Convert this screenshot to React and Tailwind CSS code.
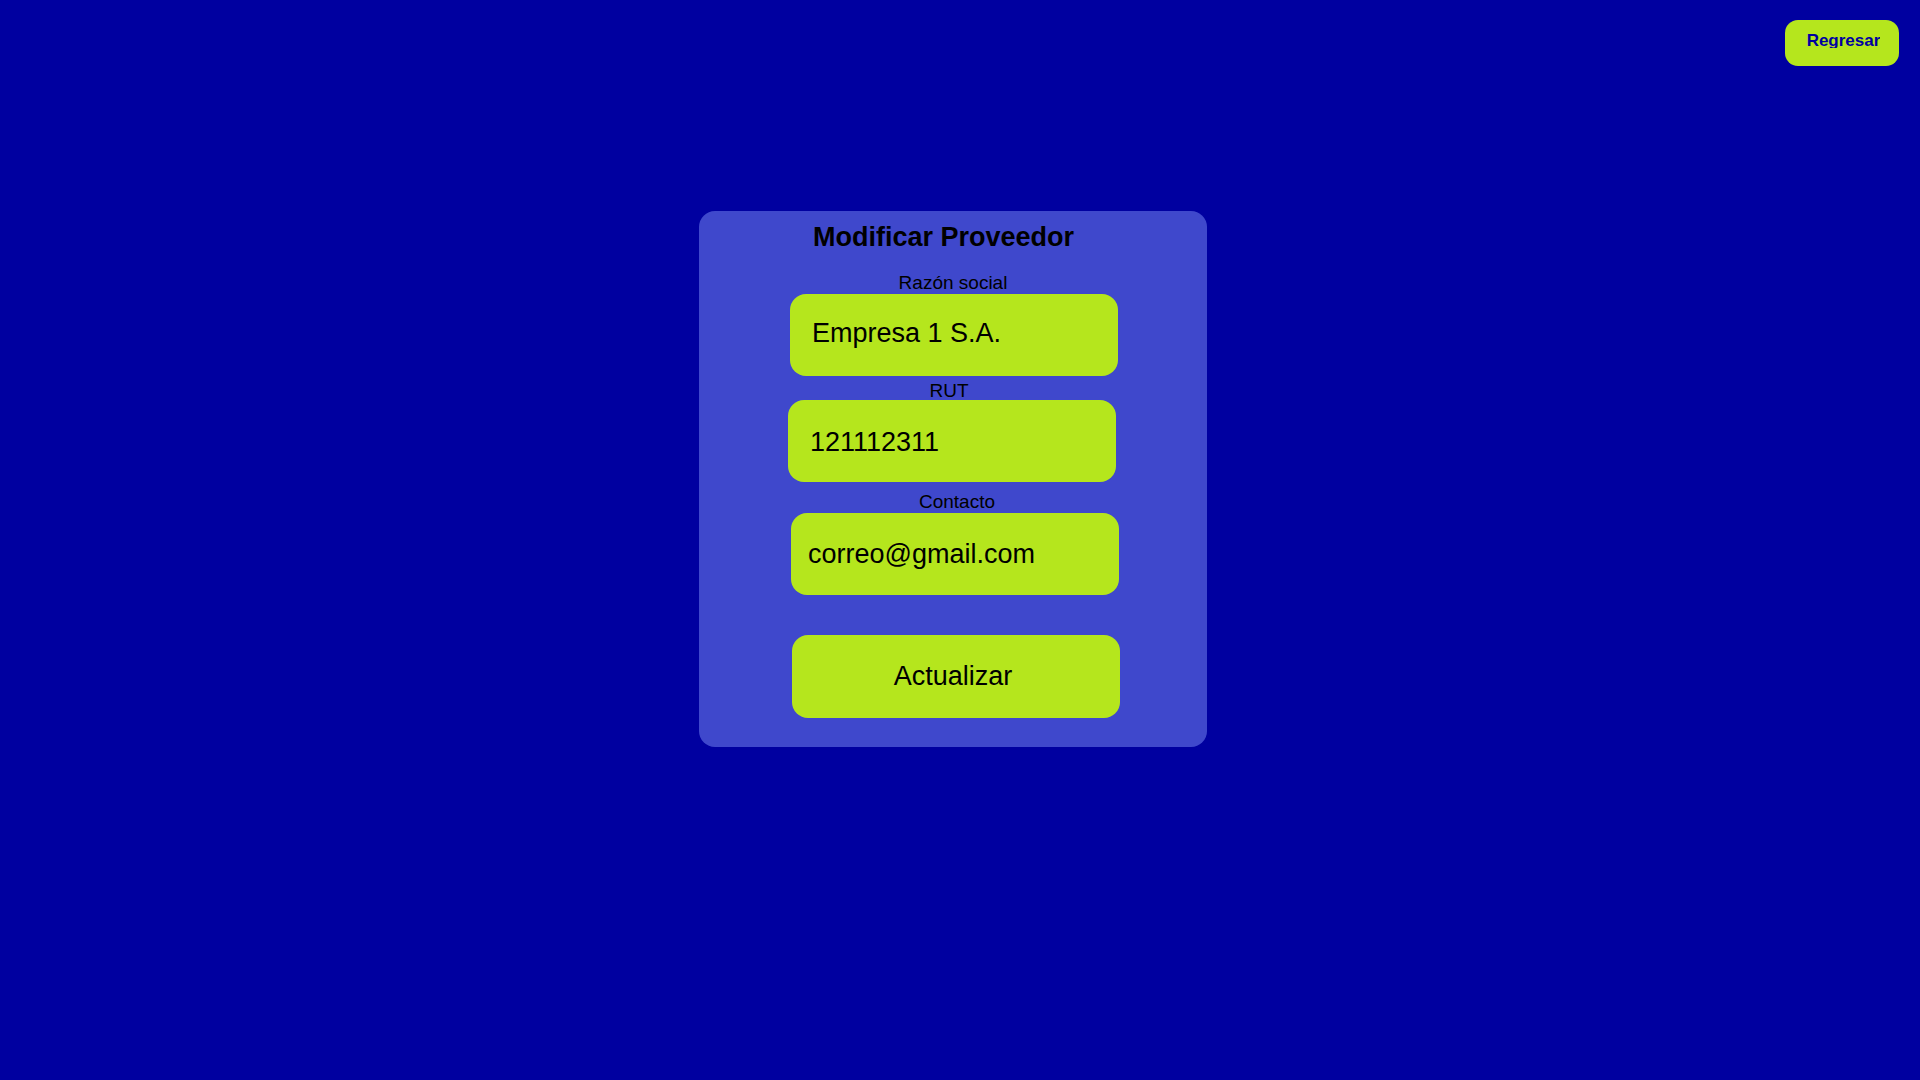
import { useState } from 'react';

const font = { fontFamily: '"Liberation Sans", Arial, Helvetica, sans-serif' };

function Field({ label, value, onChange, labelClass, boxClass, textClass }) {
   return (
      <>
         <label className={`block text-center text-[19px] leading-[19px] text-black ${labelClass}`}>{label}</label>
         <input
            value={value}
            onChange={(e) => onChange(e.target.value)}
            className={`block w-[328px] h-[82px] rounded-2xl bg-[#b5e61d] text-[27px] text-black outline-none border-0 ${boxClass} ${textClass}`}
            style={font}
         />
      </>
   );
}

export default function App() {
   const [razon, setRazon] = useState('Empresa 1 S.A.');
   const [rut, setRut] = useState('121112311');
   const [contacto, setContacto] = useState('correo@gmail.com');

   return (
      <div className="min-h-screen w-full bg-[#0000a0]" style={font}>
         {/* top bar */}
         <div className="flex justify-end pt-5 pr-[21px]">
            <button className="flex justify-center w-[114px] h-[46px] pt-[12px] pl-[3px] rounded-[13px] bg-[#b5e61d] text-[#0000a0] font-bold text-[17px]">
               <span className="block h-[16px] leading-[17px] overflow-hidden">Regresar</span>
            </button>
         </div>

         {/* form card */}
         <div className="flex justify-center pr-[14px] mt-[145px]">
            <div className="w-[508px] rounded-2xl bg-[#3f48cc] pt-[10px] pb-[29px]">
               <h1 className="text-center pr-[19px] text-[27px] leading-[32px] font-bold text-black">Modificar Proveedor</h1>

               <Field label="Razón social" value={razon} onChange={setRazon} labelClass="mt-[20px] mb-[2px]" boxClass="ml-[91px]" textClass="pl-[22px] pb-[3px]" />
               <Field label="RUT" value={rut} onChange={setRut} labelClass="mt-[5px] pr-2" boxClass="ml-[89px]" textClass="pl-[22px] pt-[3px]" />
               <Field label="Contacto" value={contacto} onChange={setContacto} labelClass="mt-[10px] mb-[2px] pl-2" boxClass="ml-[92px]" textClass="pl-[17px]" />

               <button className="block ml-[93px] mt-[40px] w-[328px] h-[83px] pr-[6px] rounded-2xl bg-[#b5e61d] text-[27px] text-black">Actualizar</button>
            </div>
         </div>
      </div>
   );
}
